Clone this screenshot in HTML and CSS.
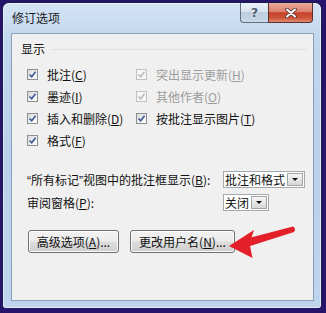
FILE: index.html
```html
<!DOCTYPE html>
<html lang="zh-CN">
<head>
  <meta charset="UTF-8">
  <title>修订选项</title>
  <link rel="stylesheet" href="styles.css">
</head>
<body>
  <div class="window">
    <div class="titlebar">
      <span class="title">修订选项</span>
      <div class="caption-buttons">
        <span class="cap-help">?</span>
        <span class="cap-close">
          <svg width="12" height="10" viewBox="0 0 12 10">
            <path d="M2 1.5 L10 8.5 M10 1.5 L2 8.5" stroke="#4a2a2a" stroke-width="3.6" stroke-linecap="round"/>
            <path d="M2 1.5 L10 8.5 M10 1.5 L2 8.5" stroke="#fff" stroke-width="2" stroke-linecap="round"/>
          </svg>
        </span>
      </div>
    </div>

    <div class="content">
      <div class="section-head">
        <span>显示</span>
        <span class="rule"></span>
      </div>

      <div class="checks">
        <label class="check"><span class="box"><svg viewBox="0 0 9 9"><path d="M1.5 4.5 L3.7 6.8 L7.6 1.8"/></svg></span>批注(<u>C</u>)</label>
        <label class="check disabled"><span class="box"><svg viewBox="0 0 9 9"><path d="M1.5 4.5 L3.7 6.8 L7.6 1.8"/></svg></span>突出显示更新(<u>H</u>)</label>
        <label class="check"><span class="box"><svg viewBox="0 0 9 9"><path d="M1.5 4.5 L3.7 6.8 L7.6 1.8"/></svg></span>墨迹(<u>I</u>)</label>
        <label class="check disabled"><span class="box"><svg viewBox="0 0 9 9"><path d="M1.5 4.5 L3.7 6.8 L7.6 1.8"/></svg></span>其他作者(<u>O</u>)</label>
        <label class="check"><span class="box"><svg viewBox="0 0 9 9"><path d="M1.5 4.5 L3.7 6.8 L7.6 1.8"/></svg></span>插入和删除(<u>D</u>)</label>
        <label class="check"><span class="box"><svg viewBox="0 0 9 9"><path d="M1.5 4.5 L3.7 6.8 L7.6 1.8"/></svg></span>按批注显示图片(<u>T</u>)</label>
        <label class="check"><span class="box"><svg viewBox="0 0 9 9"><path d="M1.5 4.5 L3.7 6.8 L7.6 1.8"/></svg></span>格式(<u>F</u>)</label>
      </div>

      <div class="fields">
        <span class="field-label"><span class="q">“</span>所有标记<span class="q">”</span>视图中的批注框显示(<u>B</u>):</span>
        <div class="select">
          <span class="value">批注和格式</span>
          <span class="drop"></span>
        </div>
        <span class="field-label">审阅窗格(<u>P</u>):</span>
        <div class="select">
          <span class="value">关闭</span>
          <span class="drop"></span>
        </div>
      </div>

      <div class="actions">
        <button class="btn btn-advanced">高级选项(<u>A</u>)...</button>
        <button class="btn btn-username">更改用户名(<u>N</u>)...</button>
      </div>
    </div>

    <!-- annotation arrow drawn over the dialog -->
    <svg class="arrow" width="80" height="40" viewBox="0 0 80 40">
      <path d="M20 17 L68 4.5 Q71.5 6.5 69 10 L22 25 Z" fill="#e3202a"/>
      <path d="M4 24 L29 8 L24.5 21.5 L27.5 36 Z" fill="#e3202a"/>
    </svg>
  </div>
</body>
</html>
```

FILE: styles.css
```css
body {
  margin: 0;
  background-color: #27146b;
  font-family: "Noto Sans CJK SC", "Microsoft YaHei", sans-serif;
  font-size: 12px;
  color: #111;
}
.window {
  position: relative;
  width: 318px;
  height: 305px;
  margin: 3px 0 0 3px;
  padding: 0 7px 7px 8px;
  box-sizing: border-box;
  border-radius: 6px 6px 3px 3px;
  background: linear-gradient(180deg, #d3e3f4 0%, #c2d7ee 12%, #b9d0ea 50%, #bfd5ee 100%);
  box-shadow: 0 0 0 1px rgba(20, 30, 60, 0.6), inset 0 0 0 1px rgba(255, 255, 255, 0.55);
}
.titlebar {
  height: 30px;
  display: flex;
  justify-content: space-between;
  align-items: flex-start;
}
.title {
  margin: 8px 0 0 1px;
  line-height: 14px;
  color: #1a1a1a;
}
.caption-buttons {
  display: flex;
  margin-right: 1px;
}
.cap-help,
.cap-close {
  display: flex;
  align-items: center;
  justify-content: center;
  height: 20px;
  box-sizing: border-box;
  border: 1px solid #5f6f88;
  border-top: none;
}
.cap-help {
  width: 28px;
  border-right: none;
  border-radius: 0 0 0 4px;
  background: linear-gradient(180deg, #eaf1f8 0%, #d7e3ef 45%, #bccddf 50%, #cbd9e8 100%);
  color: #4e5f78;
  font-family: "DejaVu Sans", sans-serif;
  font-weight: bold;
  font-size: 13px;
  text-shadow: 0 0 2px #fff;
}
.cap-close {
  width: 45px;
  border-color: #5a2e2a;
  border-radius: 0 0 4px 0;
  background: linear-gradient(180deg, #e9aa9c 0%, #dc7f6d 45%, #c6412a 52%, #cc5438 78%, #e08c74 100%);
}
.content {
  height: 268px;
  box-sizing: border-box;
  border: 1px solid #8a9fba;
  background-color: #f0f0f0;
  padding: 7px 5px 0 9px;
}
.section-head {
  display: flex;
  align-items: center;
  height: 16px;
  line-height: 16px;
}
.rule {
  flex: 1;
  height: 1px;
  margin: 0 0 0 6px;
  background-color: #dde2e8;
}
.checks {
  display: grid;
  grid-template-columns: 109px auto;
  grid-auto-rows: 22px;
  margin: 6px 0 0 6px;
}
.check {
  display: flex;
  align-items: center;
  white-space: nowrap;
}
.box {
  display: inline-flex;
  align-items: center;
  justify-content: center;
  width: 11px;
  height: 11px;
  margin-right: 9px;
  box-sizing: border-box;
  border: 1px solid #8e8f8f;
  background: linear-gradient(135deg, #d6d9de 0%, #eef0f2 55%, #ffffff 100%);
}
.box svg {
  width: 9px;
  height: 9px;
}
.box path {
  fill: none;
  stroke: #3e5690;
  stroke-width: 1.6;
}
.check.disabled {
  color: #9c9c9c;
}
.check.disabled .box {
  border-color: #c2c2c2;
  background: #f6f6f6;
}
.check.disabled .box path {
  stroke: #bababa;
}
.fields {
  display: grid;
  grid-template-columns: 196px auto;
  grid-auto-rows: 17px;
  row-gap: 6px;
  align-items: center;
  margin: 20px 0 0 6px;
}
.field-label {
  white-space: nowrap;
}
.q {
  font-family: "Liberation Sans", sans-serif;
}
.select {
  display: inline-flex;
  justify-self: start;
  height: 17px;
  box-sizing: border-box;
  border: 1px solid #a3a9b1;
  background-color: #fff;
}
.select .value {
  padding: 0 1px;
  line-height: 15px;
}
.select .drop {
  position: relative;
  width: 16px;
  height: 13px;
  margin: 1px 1px 0 1px;
  box-sizing: border-box;
  border: 1px solid #a4a4a4;
  background: linear-gradient(180deg, #f6f6f6 0%, #e6e6e6 50%, #d6d6d6 100%);
}
.select .drop::after {
  content: "";
  position: absolute;
  left: 4px;
  top: 4px;
  border-left: 3px solid transparent;
  border-right: 3px solid transparent;
  border-top: 3px solid #111;
}
.actions {
  display: flex;
  gap: 11px;
  margin: 19px 0 0 7px;
}
.btn {
  height: 23px;
  padding: 0;
  font: inherit;
  color: #111;
  border: 1px solid #707070;
  border-radius: 3px;
  background: linear-gradient(180deg, #f2f2f2 0%, #ebebeb 48%, #dddddd 52%, #cfcfcf 100%);
  box-shadow: inset 0 0 0 1px #fbfbfb;
}
.btn-advanced {
  width: 91px;
}
.btn-username {
  width: 105px;
}
.arrow {
  position: absolute;
  left: 222px;
  top: 219px;
}
```
